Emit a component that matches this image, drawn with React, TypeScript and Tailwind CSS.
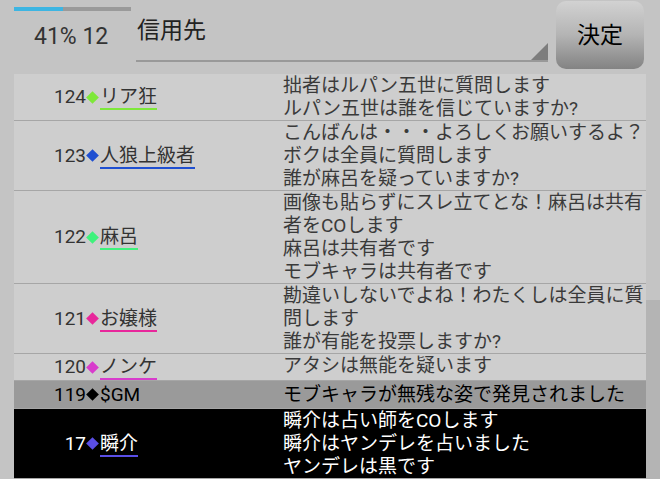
import React from 'react';

type Row = {
  no: string;
  name: string;
  color: string;
  kind?: 'gm' | 'night';
  lines: string[];
};

const rows: Row[] = [
  {
    no: '124',
    name: 'リア狂',
    color: '#7ee83a',
    lines: ['拙者はルパン五世に質問します', 'ルパン五世は誰を信じていますか?'],
  },
  {
    no: '123',
    name: '人狼上級者',
    color: '#1f4fd1',
    lines: ['こんばんは・・・よろしくお願いするよ？', 'ボクは全員に質問します', '誰が麻呂を疑っていますか?'],
  },
  {
    no: '122',
    name: '麻呂',
    color: '#3ff27c',
    lines: ['画像も貼らずにスレ立てとな！麻呂は共有', '者をCOします', '麻呂は共有者です', 'モブキャラは共有者です'],
  },
  {
    no: '121',
    name: 'お嬢様',
    color: '#e8279b',
    lines: ['勘違いしないでよね！わたくしは全員に質', '問します', '誰が有能を投票しますか?'],
  },
  {
    no: '120',
    name: 'ノンケ',
    color: '#d83ccc',
    lines: ['アタシは無能を疑います'],
  },
  {
    no: '119',
    name: '$GM',
    color: '#000000',
    kind: 'gm',
    lines: ['モブキャラが無残な姿で発見されました'],
  },
  {
    no: '17',
    name: '瞬介',
    color: '#5a4ee6',
    kind: 'night',
    lines: ['瞬介は占い師をCOします', '瞬介はヤンデレを占いました', 'ヤンデレは黒です'],
  },
];

function LogRow({ row }: { row: Row }) {
  const isGm = row.kind === 'gm';
  const isNight = row.kind === 'night';
  const rowBg = isGm ? 'bg-[#9a9a9a] py-[2px]' : isNight ? 'bg-black' : 'bg-[#cecece]';
  const textColor = isGm ? 'text-black' : isNight ? 'text-white' : 'text-[#3a3a3a]';

  return (
    <div className={`flex border-b border-[#a6a6a6] ${rowBg}`}>
      {/* who */}
      <div className={`w-[269px] flex items-center ${isNight ? 'text-white' : isGm ? 'text-black' : 'text-[#333]'}`}>
        <span className="w-[72px] text-right leading-[22px]">{row.no}</span>
        <span
          className="w-[9px] h-[9px] rotate-45 mx-[2px] shrink-0"
          style={{ backgroundColor: row.color }}
        />
        {isGm ? (
          <span className="leading-[22px] ml-[1px]">{row.name}</span>
        ) : (
          <span className="leading-[22px] border-b-2 mt-[2px] ml-[1px]" style={{ borderColor: row.color }}>
            {row.name}
          </span>
        )}
      </div>
      {/* message */}
      <div className={`flex-1 leading-[23px] ${textColor}`}>
        {row.lines.map((l, i) => (
          <div key={i}>{l}</div>
        ))}
      </div>
    </div>
  );
}

export default function App() {
  return (
    <div className="w-[660px] h-[479px] overflow-hidden bg-[#c4c4c4] font-['Roboto','Noto_Sans_CJK_JP',sans-serif]">
      {/* header */}
      <div className="flex h-[74px]">
        <div className="w-[136px] flex flex-col">
          <div className="mt-[7px] ml-[14px] w-[117px] h-[4px] bg-[#9a9a9a]">
            <div className="w-[49px] h-full bg-[#3db5e2]" />
          </div>
          <div className="ml-[34px] mt-[14px] text-[23px] leading-none text-[#333]">41% 12</div>
        </div>
        <div className="w-[412px] h-[62px] flex justify-between border-b-2 border-[#999]">
          <div className="pt-[19px] pl-[1px] text-[23px] leading-none text-[#222]">信用先</div>
          <svg width="17" height="17" viewBox="0 0 17 17" className="self-end">
            <polygon points="17,0 17,17 0,17" fill="#7d7d7d" />
          </svg>
        </div>
        <button className="ml-[8px] mt-[1px] w-[88px] h-[68px] rounded-[10px] bg-gradient-to-b from-[#d2d2d2] via-[#b4b4b4] to-[#838383] text-[23px] text-black flex items-center justify-center pt-[2px]">
          決定
        </button>
      </div>

      {/* log list */}
      <div className="flex">
        <div className="ml-[14px] w-[632px] text-[19px] bg-black">
          {rows.map((r) => (
            <LogRow key={r.no} row={r} />
          ))}
          <div className="h-[10px] bg-black" />
        </div>
        <div className="flex-1 flex flex-col">
          <div className="h-[226px]" />
          <div className="flex-1 bg-[#b4b4b4]" />
        </div>
      </div>
    </div>
  );
}
